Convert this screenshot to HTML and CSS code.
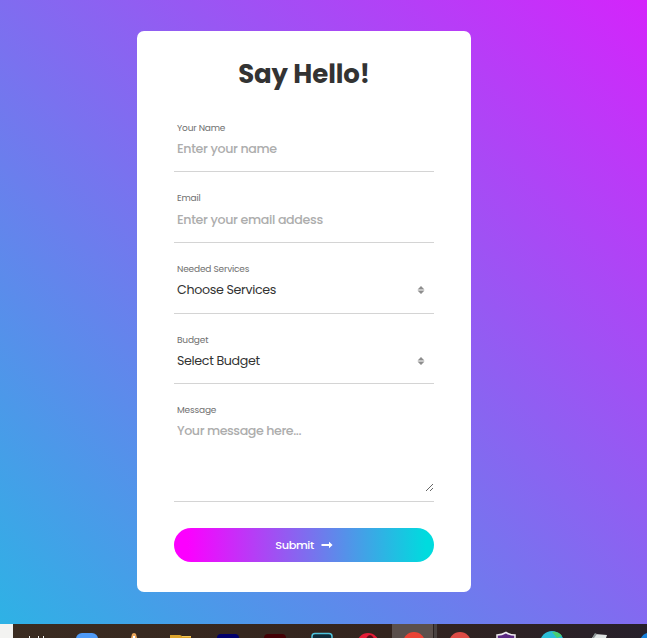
FILE: index.html
```html
<!DOCTYPE html>
<html lang="en">
<head>
<meta charset="utf-8">
<title>Say Hello!</title>
<link rel="stylesheet" href="styles.css">
</head>
<body>
<main class="page">
  <form class="card">
    <h1 class="title">Say Hello!</h1>
    <label class="field"><span class="label">Your Name</span><input class="control" placeholder="Enter your name"></label>
    <label class="field"><span class="label raised">Email</span><input class="control" placeholder="Enter your email addess"></label>
    <label class="field services"><span class="label">Needed Services</span>
      <span class="pick"><span class="value">Choose Services</span><svg class="sort" viewBox="0 0 8 8"><path d="M4 0 7.500 3.500H.5ZM.5 4.500h7L4 8Z"/></svg></span></label>
    <label class="field"><span class="label">Budget</span>
      <span class="pick"><span class="value">Select Budget</span><svg class="sort" viewBox="0 0 8 8"><path d="M4 0 7.500 3.500H.5ZM.5 4.500h7L4 8Z"/></svg></span></label>
    <label class="field message"><span class="label raised">Message</span><textarea class="control" placeholder="Your message here..."></textarea></label>
    <button class="submit" type="button"><span>Submit</span><svg class="arrow" viewBox="0 0 12 8"><path d="M.5 3.100h7.500V.8L11.600 4 8 7.200V4.900H.5Z"/></svg></button>
  </form>
</main>
<footer class="taskbar">
  <svg width="647" height="14" viewBox="0 0 647 14">
    <rect width="13" height="14" fill="#f3f3f1"/>
    <path d="M29.500 12v2M38.500 12v2M43.500 12v2" stroke="#f5f3ef"/>
    <rect x="76" y="9" width="22" height="12" rx="6" fill="#4e9af7"/>
    <path d="M131 14l1-4q2-2 4 0l1 4Z" fill="#e9a55a"/><path d="M133 12h2v2h-2Z" fill="#fff"/>
    <path d="M170 14v-3h10l2 1h9v2Z" fill="#dca32b"/><path d="M182 12h9v1h-9Z" fill="#f6c957"/>
    <rect x="217" y="10" width="22" height="12" rx="4" fill="#02006b"/>
    <rect x="264" y="10" width="22" height="12" rx="4" fill="#430004"/>
    <rect x="312" y="9.500" width="20" height="12" rx="3" fill="#102c3a" stroke="#4fc4dc" stroke-width="1.500"/>
    <circle cx="368" cy="20" r="11" fill="#e51c36"/><ellipse cx="370" cy="20" rx="5" ry="9" fill="#55101b"/>
    <rect x="392" width="41" height="14" fill="#5b504c"/><rect x="433" width="4" height="14" fill="#48413f"/><path d="M433.500 0v14" stroke="#29211f"/>
    <circle cx="414" cy="19" r="11" fill="#ea4335"/>
    <circle cx="460" cy="19" r="11" fill="#dc4b45"/>
    <path d="M497 14v-3q5 0 9-2.500q4 2.500 9 2.500v3" fill="#5b2a82" stroke="#f0edf0" stroke-width="1.500"/>
    <circle cx="552" cy="19" r="12" fill="#2bbdd7"/><path d="M552 8q6-1 10 4l-5 2Z" fill="#48cf72"/>
    <path d="M592 14l3-4 12 1-1 3Z" fill="#dfe3e3"/><path d="M592 14l3-5 2 1-3 4Z" fill="#8b9394"/>
    <path d="M641 14q2-4 6-5v5Z" fill="#1781dc"/>
  </svg>
</footer>
</body>
</html>
```
FILE: styles.css
```css
* { box-sizing: border-box; }
body {
  margin: 0;
  width: 647px;
  height: 638px;
  overflow: hidden;
  font-family: Poppins, Inter, "Liberation Sans", sans-serif;
}
.page {
  height: 624px;
  padding: 31px 0 0 137px;
  background: linear-gradient(45deg, #2eb2e5, #d424fb);
}
.card {
  width: 334px;
  height: 561px;
  padding: 25px 37px 0;
  border-radius: 7px;
  background: #fff;
}
.title {
  margin: 0 0 30px;
  height: 36px;
  line-height: 36px;
  font-size: 26px;
  font-weight: 700;
  letter-spacing: -0.1px;
  text-align: center;
  color: #333;
}
.field {
  display: block;
  height: 50px;
  padding: 0 3px;
  margin-bottom: 20.700px;
  border-bottom: 1px solid #d4d4d4;
}
.services { height: 51px; margin-bottom: 19.700px; }
.label {
  display: block;
  height: 12px;
  line-height: 12px;
  font-size: 9px;
  letter-spacing: -0.17px;
  color: #707070;
}
.raised { line-height: 10.500px; }
.control {
  display: block;
  width: 100%;
  height: 22px;
  margin: 4px 0 0;
  padding: 0;
  border: 0;
  outline: 0;
  background: transparent;
  font: 500 12.670px/20px Poppins, Inter, "Liberation Sans", sans-serif;
  letter-spacing: -0.35px;
  color: #333;
}
.control::placeholder { color: #adadad; opacity: 1; }
.pick {
  display: flex;
  align-items: center;
  justify-content: space-between;
  height: 22px;
  margin-top: 4px;
  padding-right: 6.500px;
}
.value {
  font-size: 12.670px;
  letter-spacing: -0.35px;
  color: #333;
}
.sort { width: 8px; height: 8px; fill: #8d8d8d; }
.message { height: 97px; padding-right: 0; margin-bottom: 26px; }
.message .control { height: 71px; resize: both; letter-spacing: -0.43px; }
.submit {
  display: flex;
  align-items: center;
  justify-content: center;
  gap: 7px;
  width: 260px;
  height: 34px;
  padding: 0;
  border: 0;
  border-radius: 17px;
  background: linear-gradient(to right, #fc00ff 5%, #00dbde 97%);
  color: #fff;
  font: 500 11.330px/16px Poppins, Inter, "Liberation Sans", sans-serif;
  letter-spacing: -0.4px;
}
.arrow { width: 12px; height: 8px; fill: #fff; }
.taskbar { height: 14px; background: linear-gradient(to right, #3b2c21, #33241e 60%, #27202b); }
.taskbar svg { display: block; }
```
